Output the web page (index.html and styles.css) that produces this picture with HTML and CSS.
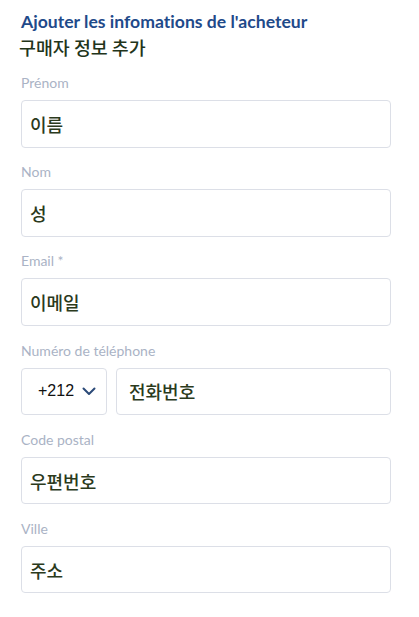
FILE: index.html
```html
<!DOCTYPE html>
<html lang="fr">
<head>
<meta charset="utf-8">
<link rel="stylesheet" href="styles.css">
</head>
<body>
<div class="page">
  <h1 class="title">Ajouter les infomations de l'acheteur</h1>
  <div class="subtitle">구매자 정보 추가</div>
  <div class="fields">
    <div class="field">
      <div class="label">Prénom</div>
      <div class="input"><span class="value">이름</span></div>
    </div>
    <div class="field">
      <div class="label">Nom</div>
      <div class="input"><span class="value">성</span></div>
    </div>
    <div class="field">
      <div class="label">Email *</div>
      <div class="input"><span class="value">이메일</span></div>
    </div>
    <div class="field">
      <div class="label">Numéro de téléphone</div>
      <div class="phone-row">
        <div class="input select">
          <span class="code">+212</span>
          <svg class="chevron" width="14" height="9" viewBox="0 0 14 9"><path d="M1.5 1.5 L7 7 L12.5 1.5" fill="none" stroke="#2b4a78" stroke-width="2" stroke-linecap="round" stroke-linejoin="round"/></svg>
        </div>
        <div class="input grow"><span class="value">전화번호</span></div>
      </div>
    </div>
    <div class="field">
      <div class="label">Code postal</div>
      <div class="input"><span class="value">우편번호</span></div>
    </div>
    <div class="field">
      <div class="label">Ville</div>
      <div class="input"><span class="value">주소</span></div>
    </div>
  </div>
</div>
</body>
</html>
```

FILE: styles.css
```css
* { box-sizing: border-box; }
html, body { margin: 0; padding: 0; background: #fff; }
body { font-family: Lato, "Noto Sans CJK KR", sans-serif; }
.page { padding: 10px 28px 0 21px; width: 419px; }
.title {
  margin: 0;
  font-size: 17.6px;
  font-weight: 700;
  line-height: 24px;
  color: #1f4a8a;
  font-variant-ligatures: none;
}
.subtitle {
  font-family: "Noto Sans CJK KR", sans-serif;
  font-size: 18.4px;
  font-weight: 500;
  line-height: 26px;
  color: #22341a;
  margin-left: -2px;
}
.fields { display: flex; flex-direction: column; gap: 15.7px; margin-top: 14px; }
.field { display: flex; flex-direction: column; gap: 8px; }
.label { font-size: 14px; line-height: 18px; color: #aab3c5; }
.input {
  height: 47.5px;
  border: 1px solid #dcdfe7;
  border-radius: 4px;
  display: flex;
  align-items: center;
  padding-left: 8px;
}
.value {
  font-family: "Noto Sans CJK KR", sans-serif;
  font-size: 18px;
  font-weight: 500;
  color: #2b3a1c;
}
.phone-row { display: flex; gap: 9px; }
.select { width: 86px; flex: none; padding-left: 16px; gap: 8px; }
.code { font-family: "Liberation Sans", Arial, sans-serif; font-size: 16px; color: #111; }
.grow { flex: 1; padding-left: 12px; }
```
